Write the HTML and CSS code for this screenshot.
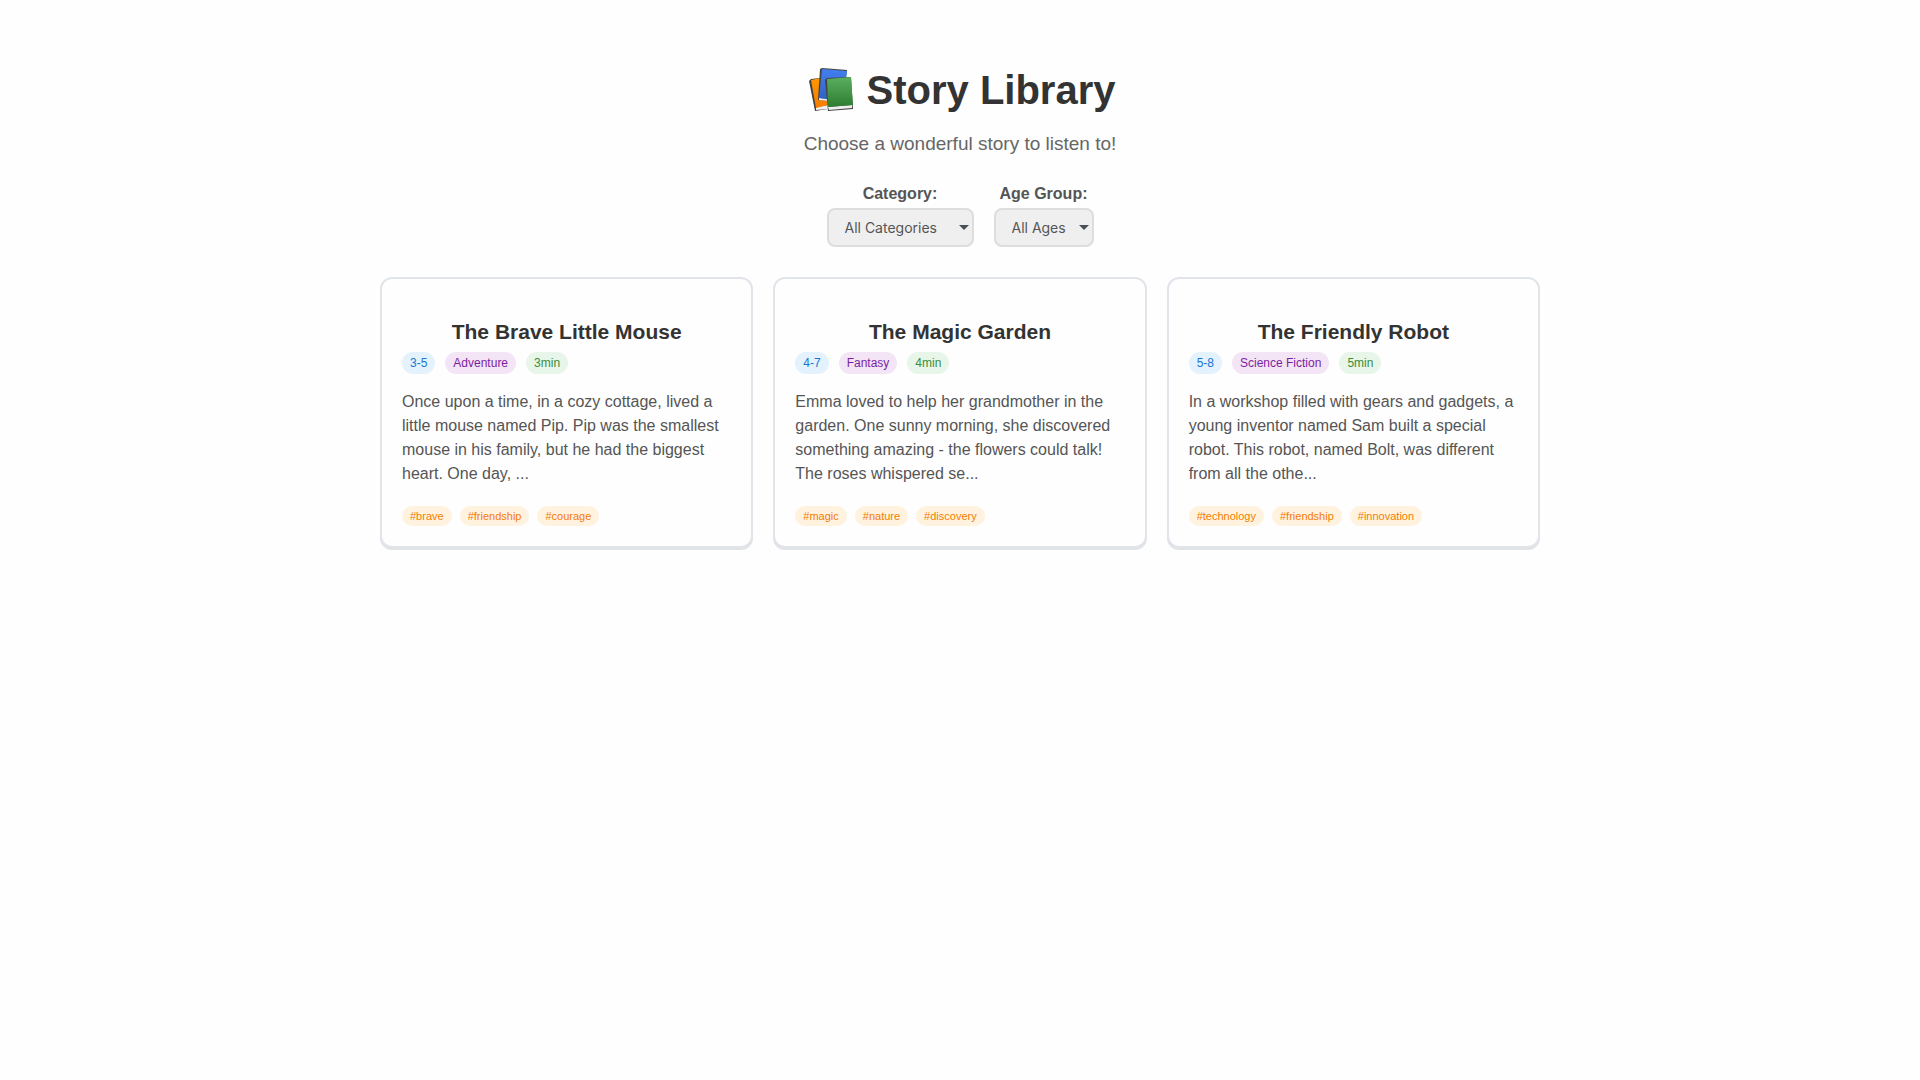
FILE: index.html
```html
<!DOCTYPE html>
<html lang="en">
<head>
<meta charset="utf-8">
<title>Story Library</title>
<link rel="stylesheet" href="styles.css">
</head>
<body>
<main class="library">
  <header class="header">
    <h1 class="title">
      <svg class="books" viewBox="0 0 44 44" aria-hidden="true">
        <defs>
          <linearGradient id="orange" x1="0" y1="0" x2="0" y2="1"><stop offset="0" stop-color="#ff9800"/><stop offset="1" stop-color="#f57c00"/></linearGradient>
          <linearGradient id="blue" x1="0" y1="0" x2="0" y2="1"><stop offset="0" stop-color="#4280f0"/><stop offset="1" stop-color="#3060c0"/></linearGradient>
          <linearGradient id="green" x1="0" y1="0" x2="0" y2="1"><stop offset="0" stop-color="#5aae5e"/><stop offset="1" stop-color="#2e7d32"/></linearGradient>
        </defs>
        <path d="M0 13 2 11 11 10 19 41 6 43Z" fill="#424242"/>
        <path d="M7 39 19 37 20 41 7 42Z" fill="#eee"/>
        <path d="M2 12 12 10 19 37 7 40Z" fill="url(#orange)"/>
        <path d="M11 1 13 0 38 2 34 34 9 32Z" fill="#424242"/>
        <path d="M10 30 30 32 30 34 10 32Z" fill="#eee"/>
        <path d="M13 1 38 3 34 33 10 30Z" fill="url(#blue)"/>
        <path d="M16 12 18 10 42 9 44 41 19 43Z" fill="#424242"/>
        <path d="M19 39 43 37 43 40 20 42Z" fill="#eee"/>
        <path d="M18 11 42 9 44 37 19 39Z" fill="url(#green)"/>
      </svg>
      <span>Story Library</span>
    </h1>
    <p class="subtitle">Choose a wonderful story to listen to!</p>
  </header>
  <form class="filters">
    <div class="filter">
      <label for="category">Category:</label>
      <select id="category"><option>All Categories</option><option>Adventure</option><option>Fantasy</option><option>Science Fiction</option></select>
    </div>
    <div class="filter">
      <label for="age">Age Group:</label>
      <select id="age"><option>All Ages</option><option>3-5</option><option>4-7</option><option>5-8</option></select>
    </div>
  </form>
  <section class="grid">
    <article class="card">
      <h2 class="card-title">The Brave Little Mouse</h2>
      <div class="meta"><span class="age">3-5</span><span class="category">Adventure</span><span class="duration">3min</span></div>
      <p class="preview">Once upon a time, in a cozy cottage, lived a little mouse named Pip. Pip was the smallest mouse in his family, but he had the biggest heart. One day, ...</p>
      <div class="tags"><span>#brave</span><span>#friendship</span><span>#courage</span></div>
    </article>
    <article class="card">
      <h2 class="card-title">The Magic Garden</h2>
      <div class="meta"><span class="age">4-7</span><span class="category">Fantasy</span><span class="duration">4min</span></div>
      <p class="preview">Emma loved to help her grandmother in the garden. One sunny morning, she discovered something amazing - the flowers could talk! The roses whispered se...</p>
      <div class="tags"><span>#magic</span><span>#nature</span><span>#discovery</span></div>
    </article>
    <article class="card">
      <h2 class="card-title">The Friendly Robot</h2>
      <div class="meta"><span class="age">5-8</span><span class="category">Science Fiction</span><span class="duration">5min</span></div>
      <p class="preview">In a workshop filled with gears and gadgets, a young inventor named Sam built a special robot. This robot, named Bolt, was different from all the othe...</p>
      <div class="tags"><span>#technology</span><span>#friendship</span><span>#innovation</span></div>
    </article>
  </section>
</main>
</body>
</html>
```
FILE: styles.css
```css
* { box-sizing: border-box; }
body { margin: 0; background: #fefefe; color: #333; font: 16px/24px "Liberation Sans", Arial, sans-serif; }
.library { max-width: 1200px; margin: 0 auto; padding: 60px 20px 40px; }
.header { text-align: center; }
.title { display: flex; justify-content: center; align-items: center; gap: 14px; margin: 0 0 10px; padding-left: 4px; font-size: 40px; line-height: 60px; }
.books { width: 44px; height: 44px; }
.subtitle { margin: 0; font-size: 19px; line-height: 28px; color: #666; }
.filters { display: flex; justify-content: center; gap: 20px; margin: 24px 0 30px; }
.filter { display: flex; flex-direction: column; align-items: center; gap: 2px; }
.filter label { font-weight: bold; color: #555; }
.filter select {
  appearance: none;
  padding: 8px 25px 8px 16px;
  border: 2px solid #ddd;
  border-radius: 8px;
  background: #efefef url("data:image/svg+xml,%3Csvg xmlns='http://www.w3.org/2000/svg' width='10' height='5'%3E%3Cpath d='M0 0h10L5 5z' fill='%23495057'/%3E%3C/svg%3E") no-repeat right 3px center;
  color: #555;
  font: 14px/19px Inter, sans-serif;
}
.grid { display: grid; grid-template-columns: repeat(auto-fit, minmax(300px, 1fr)); gap: 20px; }
.card { padding: 40px 20px 20px; border: 2px solid #e1e5e9; border-radius: 12px; background: #fefefe; box-shadow: 0 2px 0 #e1e3e5; }
.card-title { margin: 0 0 8px; font-size: 21px; line-height: 25px; text-align: center; }
.meta { display: flex; gap: 10px; margin-bottom: 16px; font-size: 12px; line-height: 18px; }
.meta span { padding: 2px 8px; border-radius: 12px; }
.age { background: #e3f2fd; color: #1976d2; }
.category { background: #f3e5f5; color: #7b1fa2; }
.duration { background: #e8f5e9; color: #388e3c; }
.preview { margin: 0 0 20px; color: #555; }
.tags { display: flex; gap: 8px; font-size: 11px; line-height: 16px; }
.tags span { padding: 2px 8px; border-radius: 10px; background: #fff3e0; color: #f57c00; }
```
